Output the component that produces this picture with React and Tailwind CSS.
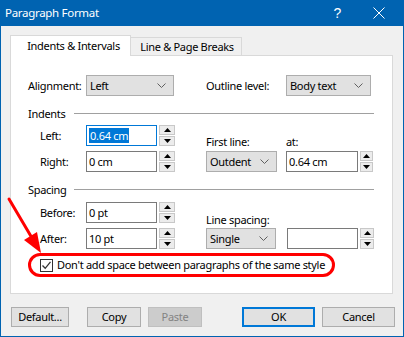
import React from 'react';

const Chevron = () => (
  <svg width="9" height="5" viewBox="0 0 9 5" className="shrink-0">
    <path d="M0.5 0.5 L4.5 4.5 L8.5 0.5" fill="none" stroke="#606060" strokeWidth="1" />
  </svg>
);

const Combo = ({ w, text }) => (
  <div className={`${w} h-[21px] flex items-center justify-between border border-[#adadad] bg-[#e1e1e1] pl-[3px] pr-[7px]`}>
    <span>{text}</span>
    <Chevron />
  </div>
);

const TextBox = ({ w, children, focused }) => (
  <div
    className={`${w} h-[21px] flex items-center border bg-white pl-[2px] ${
      focused ? 'border-[#0078d7]' : 'border-[#7a7a7a]'
    }`}
  >
    {children}
  </div>
);

const Spinner = ({ w }) => (
  <div className={`${w} h-[21px] flex flex-col justify-between`}>
    <div className="h-[10px] flex items-center justify-center border border-[#c8c8c8] bg-[#ececec]">
      <svg width="7" height="4" viewBox="0 0 7 4">
        <path d="M0 4 L3.5 0 L7 4 Z" fill="#000" />
      </svg>
    </div>
    <div className="h-[10px] flex items-center justify-center border border-[#c8c8c8] bg-[#ececec]">
      <svg width="7" height="4" viewBox="0 0 7 4">
        <path d="M0 0 L3.5 4 L7 0 Z" fill="#000" />
      </svg>
    </div>
  </div>
);

const Section = ({ title }) => (
  <div className="h-[14px] flex items-center">
    <span className="w-[46px] leading-none">{title}</span>
    <div className="flex-1 h-px bg-[#a0a0a0]" />
  </div>
);

const Btn = ({ w, children, primary, disabled }) => (
  <div
    className={`${w} h-[20px] flex items-center justify-center ${
      primary
        ? 'border-2 border-[#0078d7] bg-[#e1e1e1]'
        : disabled
        ? 'border border-[#bfbfbf] bg-[#cccccc] text-[#838383]'
        : 'border border-[#adadad] bg-[#e1e1e1]'
    }`}
  >
    {children}
  </div>
);

export default function App() {
  return (
    <div className="relative w-[404px] h-[337px] flex flex-col bg-[#f0f0f0] border-x border-b border-[#0063b1] text-[11px] leading-[14px] text-black font-['Noto_Sans',sans-serif] tracking-[-0.3px] select-none">
      {/* title bar */}
      <div className="h-[26px] -mx-px flex items-center bg-[#0063b1] text-white pl-[5px]">
        <span className="text-[11.5px]">Paragraph Format</span>
        <span className="ml-auto mr-[32px] text-[14px] font-['Liberation_Sans',sans-serif]">?</span>
        <svg width="12" height="12" viewBox="0 0 12 12" className="mr-[19px]">
          <path d="M0.5 0.5 L11.5 11.5 M11.5 0.5 L0.5 11.5" stroke="#fff" strokeWidth="1" />
        </svg>
      </div>

      <div className="flex flex-col pt-[9px] pl-[9px]">
        {/* tabs */}
        <div className="flex items-end h-[20px]">
          <div className="relative z-10 -mb-px w-[121px] h-[21px] flex items-center justify-center border-x border-t border-[#d9d9d9] bg-white pl-[6px]">
            Indents &amp; Intervals
          </div>
          <div className="w-[111px] h-[18px] flex items-center justify-center border-r border-t border-[#d9d9d9] bg-[#f0f0f0] pl-[2px]">
            Line &amp; Page Breaks
          </div>
        </div>

        {/* panel */}
        <div className="w-[383px] h-[239px] border border-[#d9d9d9] bg-white pl-[17px] pr-[18px] pt-[19px] flex flex-col">
          <div className="flex items-center h-[21px]">
            <span className="w-[58px]">Alignment:</span>
            <Combo w="w-[88px]" text="Left" />
            <span className="ml-[32px] w-[80px]">Outline level:</span>
            <Combo w="w-[85px]" text="Body text" />
          </div>

          <div className="mt-[10px]">
            <Section title="Indents" />
          </div>
          <div className="flex mt-[5px]">
            <div className="w-[178px] flex flex-col gap-[5px] pl-[12px]">
              <div className="flex items-center">
                <span className="w-[46px]">Left:</span>
                <TextBox w="w-[71px]" focused>
                  <span className="bg-[#0078d7] text-white leading-[15px] px-px">0.64 cm</span>
                </TextBox>
                <div className="ml-[2px]">
                  <Spinner w="w-[16px]" />
                </div>
              </div>
              <div className="flex items-center">
                <span className="w-[46px]">Right:</span>
                <TextBox w="w-[71px]">0 cm</TextBox>
                <div className="ml-[2px]">
                  <Spinner w="w-[16px]" />
                </div>
              </div>
            </div>
            <div className="flex flex-col pt-[10px]">
              <div className="flex h-[14px] items-center">
                <span className="w-[80px]">First line:</span>
                <span>at:</span>
              </div>
              <div className="flex items-center mt-[2px]">
                <Combo w="w-[71px]" text="Outdent" />
                <div className="ml-[9px]">
                  <TextBox w="w-[72px]">0.64 cm</TextBox>
                </div>
                <div className="ml-[2px]">
                  <Spinner w="w-[13px]" />
                </div>
              </div>
            </div>
          </div>

          <div className="mt-[10px]">
            <Section title="Spacing" />
          </div>
          <div className="flex mt-[6px]">
            <div className="w-[178px] flex flex-col gap-[5px] pl-[12px]">
              <div className="flex items-center">
                <span className="w-[46px]">Before:</span>
                <TextBox w="w-[71px]">0 pt</TextBox>
                <div className="ml-[2px]">
                  <Spinner w="w-[16px]" />
                </div>
              </div>
              <div className="flex items-center">
                <span className="w-[46px]">After:</span>
                <TextBox w="w-[71px]">10 pt</TextBox>
                <div className="ml-[2px]">
                  <Spinner w="w-[16px]" />
                </div>
              </div>
            </div>
            <div className="flex flex-col pt-[11px]">
              <div className="flex h-[14px] items-center">
                <span>Line spacing:</span>
              </div>
              <div className="flex items-center mt-[1px]">
                <Combo w="w-[70px]" text="Single" />
                <div className="ml-[11px]">
                  <TextBox w="w-[71px]" />
                </div>
                <div className="ml-[2px]">
                  <Spinner w="w-[14px]" />
                </div>
              </div>
            </div>
          </div>

          {/* highlighted checkbox row */}
          <div className="mt-[4px] w-[307px] h-[24px] flex items-center rounded-full border-[3px] border-[#f00] pl-[9px]">
            <div className="w-[13px] h-[13px] border border-[#333] bg-white flex items-center justify-center">
              <svg width="11" height="11" viewBox="0 0 11 11">
                <path d="M1.5 5.5 L4.2 8.3 L9.5 1.8" fill="none" stroke="#333" strokeWidth="1.3" />
              </svg>
            </div>
            <span className="ml-[4px] whitespace-nowrap">Don't add space between paragraphs of the same style</span>
          </div>
        </div>

        {/* buttons */}
        <div className="flex mt-[13px] pl-[1px]">
          <Btn w="w-[58px]">Default...</Btn>
          <div className="ml-[18px]">
            <Btn w="w-[54px]">Copy</Btn>
          </div>
          <div className="ml-[7px]">
            <Btn w="w-[54px]" disabled>Paste</Btn>
          </div>
          <div className="ml-[40px]">
            <Btn w="w-[73px]" primary>OK</Btn>
          </div>
          <div className="ml-[7px]">
            <Btn w="w-[73px]">Cancel</Btn>
          </div>
        </div>
      </div>

      {/* red annotation arrow */}
      <svg className="absolute left-0 top-0 pointer-events-none" width="404" height="337" viewBox="0 0 404 337">
        <line x1="8" y1="199" x2="31" y2="238" stroke="#f00" strokeWidth="3" strokeLinecap="round" />
        <polygon points="40,253 36,232 23,240" fill="#f00" />
      </svg>
    </div>
  );
}
